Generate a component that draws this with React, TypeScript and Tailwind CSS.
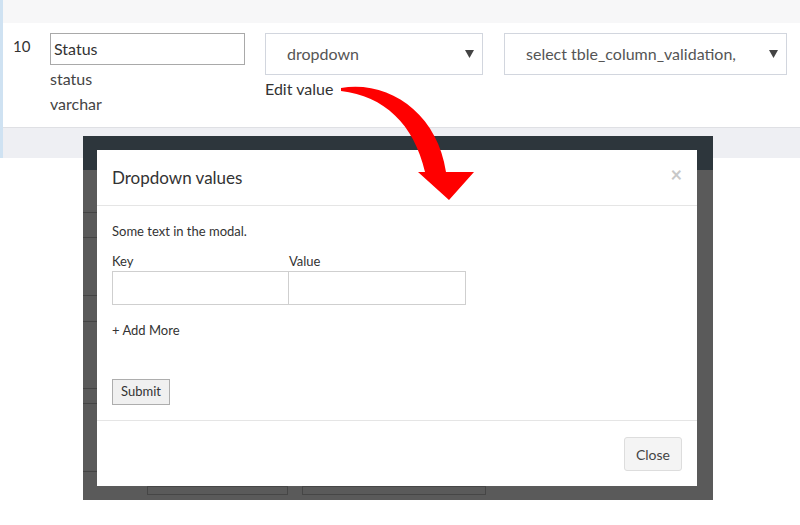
import React from "react";

const Caret: React.FC = () => (
  <svg width="9" height="8" viewBox="0 0 9 8" className="fill-[#444]">
    <polygon points="0,0 9,0 4.5,8" />
  </svg>
);

interface SelectBoxProps {
  label: string;
  width: string;
}

const SelectBox: React.FC<SelectBoxProps> = ({ label, width }) => (
  <div
    className={`${width} flex h-[42px] items-center border border-[#d2d6de] bg-white pl-[21px] pr-[8px]`}
  >
    <span className="grow overflow-hidden whitespace-nowrap text-[16px] text-[#555]">
      {label}
    </span>
    <span className="ml-2 shrink-0">
      <Caret />
    </span>
  </div>
);

const App: React.FC = () => {
  return (
    <div className="relative h-[525px] w-[800px] overflow-hidden bg-white font-['Lato','Liberation_Sans',sans-serif] text-[#333]">
      <div className="border-l-[3px] border-[#cfe2f2]">
        <div className="h-[23px] bg-[#f7f7f8]"></div>
        <div className="flex h-[105px] border-b border-[#dfe0e4] bg-white pt-[10px]">
          <div className="w-[47px] pl-[10px] pt-[3px] text-[15px] leading-[20px]">10</div>
          <div className="flex w-[195px] flex-col">
            <div className="flex h-[32px] items-center border border-[#a9a9a9] px-[3px] text-[16px]">
              Status
            </div>
            <div className="mt-[1px] text-[16px] leading-[25px] text-[#444]">status</div>
            <div className="text-[16px] leading-[25px] text-[#444]">varchar</div>
          </div>
          <div className="ml-[20px] flex flex-col">
            <SelectBox label="dropdown" width="w-[218px]" />
            <div className="mt-[3px] text-[16px] leading-[22px] text-[#333]">Edit value</div>
          </div>
          <div className="ml-[21px]">
            <SelectBox label="select tble_column_validation," width="w-[283px]" />
          </div>
        </div>
        <div className="h-[30px] bg-[#eeeff3]"></div>
      </div>

      {/* screenshot of the modal over its dark backdrop */}
      <div className="absolute left-[83px] top-[136px] h-[364px] w-[630px] bg-[#5a5a5a] p-[14px]">
        <div className="absolute left-0 right-0 top-0 h-[34px] bg-[#2d363c]"></div>
        <div className="absolute left-0 top-[76px] h-px w-[14px] bg-[#444]"></div>
        <div className="absolute left-0 top-[101px] h-px w-[14px] bg-[#444]"></div>
        <div className="absolute left-0 top-[159px] h-px w-[14px] bg-[#444]"></div>
        <div className="absolute left-0 top-[185px] h-px w-[14px] bg-[#444]"></div>
        <div className="absolute left-0 top-[252px] h-px w-[14px] bg-[#444]"></div>
        <div className="absolute left-0 top-[267px] h-px w-[14px] bg-[#444]"></div>
        <div className="absolute left-0 top-[335px] h-px w-[14px] bg-[#444]"></div>
        <div className="absolute left-[64px] top-[350px] h-[9px] w-[141px] border border-[#464646]"></div>
        <div className="absolute left-[219px] top-[350px] h-[9px] w-[184px] border border-[#464646]"></div>

        <div className="relative flex h-[336px] w-[600px] flex-col bg-white">
          <div className="flex h-[56px] items-center justify-between border-b border-[#e5e5e5] px-[15px]">
            <span className="text-[17px] text-[#333]">Dropdown values</span>
            <span className="-mt-[8px] text-[20px] font-bold leading-none text-[#c8c8c8]">×</span>
          </div>
          <div className="flex flex-col items-start border-b border-[#e5e5e5] px-[15px] pb-[15px] pt-[16px] text-[13px]">
            <div className="leading-[18px] text-[#333]">Some text in the modal.</div>
            <div className="mt-[12px] flex leading-[18px]">
              <span className="w-[177px]">Key</span>
              <span>Value</span>
            </div>
            <div className="mt-px flex">
              <div className="h-[34px] w-[177px] border border-[#cfcfcf]"></div>
              <div className="h-[34px] w-[177px] border border-l-0 border-[#cfcfcf]"></div>
            </div>
            <div className="mt-[16px] leading-[18px] text-[#333]">+ Add More</div>
            <button className="mt-[40px] flex h-[26px] w-[58px] items-center justify-center border border-[#adadad] bg-[#f0f0f0] text-[13px] text-[#333]">
              Submit
            </button>
          </div>
          <div className="flex grow items-start justify-end px-[15px] pt-[16px]">
            <button className="flex h-[34px] w-[58px] items-center justify-center rounded-[3px] border border-[#dddddd] bg-[#f4f4f4] text-[14px] text-[#444]">
              Close
            </button>
          </div>
        </div>
      </div>

      <svg
        className="pointer-events-none absolute left-0 top-0"
        width="800"
        height="525"
        viewBox="0 0 800 525"
      >
        <path
          d="M341,88 C388,80 437,112 446,172 L474,172 L449,200 L418,172 L425,172 C414,124 384,96 341,91 Z"
          fill="#ff0000"
        />
      </svg>
    </div>
  );
};

export default App;
